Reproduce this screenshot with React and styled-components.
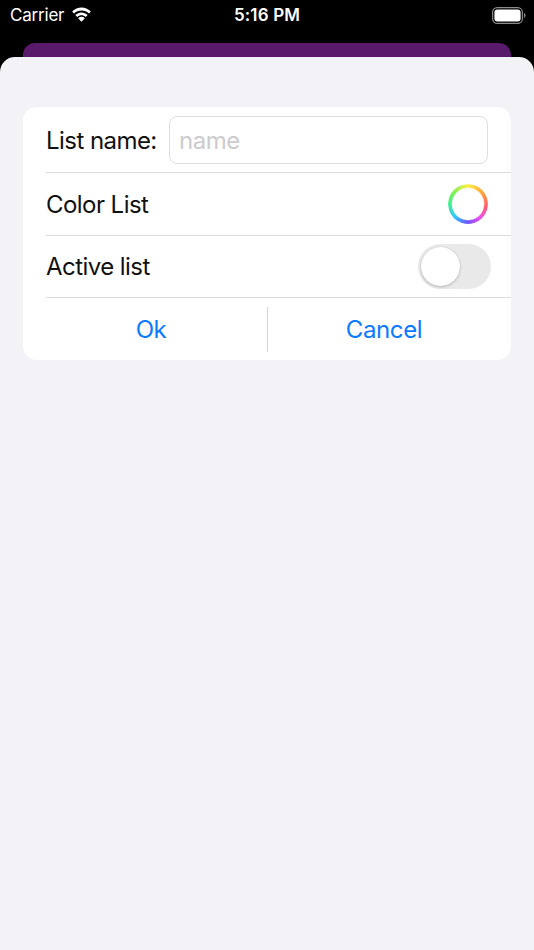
import React from "react";
import styled, { createGlobalStyle } from "styled-components";

const Global = createGlobalStyle`
  html, body { margin: 0; padding: 0; background: #000; }
  body { font-family: Inter, "Liberation Sans", sans-serif; -webkit-font-smoothing: antialiased; }
  * { box-sizing: border-box; }
`;
const Screen = styled.div`
  width: 534px; height: 950px; background: #000; display: flex; flex-direction: column; overflow: hidden;
`;
const StatusBar = styled.div`
  height: 43px; flex: none; display: grid; grid-template-columns: 1fr auto 1fr; align-items: start;
  padding: 0 8px; color: #fff;
`;
const StatusLeft = styled.div`display: flex; align-items: center; gap: 7px; height: 30px; padding-left: 2px;`;
const Carrier = styled.span`font-size: 17px; letter-spacing: -0.2px;`;
const Time = styled.span`font-size: 17px; font-weight: 600; line-height: 30px; letter-spacing: 0.15px;`;
const StatusRight = styled.div`display: flex; justify-content: flex-end; align-items: center; height: 30px;`;
const BackCard = styled.div`
  height: 14px; flex: none; margin: 0 23px; background: #591a6b; border-radius: 12px 12px 0 0;
`;
const Sheet = styled.div`
  flex: 1; background: #f2f2f7; border-radius: 15px 15px 0 0; padding: 50px 23px 0;
`;
const Card = styled.div`
  background: #fff; border-radius: 14px; height: 253px; display: flex; flex-direction: column;
  padding-left: 23px; overflow: hidden;
`;
const Row = styled.div`
  height: ${p => p.$h}px; flex: none; display: flex; align-items: center; justify-content: space-between;
  border-bottom: 1.5px solid #dcdcdf;
  padding-right: ${p => p.$pr}px;
`;
const Label = styled.span`
  font-size: 24px; color: #111; letter-spacing: -0.55px; white-space: nowrap;
  margin-top: ${p => p.$mt || 0}px;
`;
const NameInput = styled.input`
  width: 319px; height: 48px; border: 1.5px solid #dedee0; border-radius: 8px; background: #fff;
  font: inherit; font-size: 24px; letter-spacing: -0.5px; padding: 0 9px; outline: none; margin-top: 1px;
  &::placeholder { color: #cbcbce; opacity: 1; }
`;
const ColorRing = styled.div`
  width: 40px; height: 40px; border-radius: 50%;
  background: conic-gradient(#fff04a 0deg, #ffa040 55deg, #ff5a70 100deg, #f050f0 140deg, #7050ff 180deg, #30c8ff 225deg, #40f090 270deg, #80f050 310deg, #fff04a 360deg);
  -webkit-mask: radial-gradient(circle, transparent 15.5px, #000 16.8px);
  mask: radial-gradient(circle, transparent 15.5px, #000 16.8px);
`;
const Switch = styled.div`
  width: 73px; height: 45px; border-radius: 23px; background: #e9e9ea; padding: 3px; flex: none;
`;
const Knob = styled.div`
  width: 39px; height: 39px; border-radius: 50%; background: #fff;
  box-shadow: 0 1.5px 3px rgba(0,0,0,.14), 0 0 1.5px rgba(0,0,0,.2);
`;
const Actions = styled.div`
  flex: 1; display: grid; grid-template-columns: 221px 1fr; align-items: center;
`;
const ActionButton = styled.button`
  background: none; border: 0; height: 45px; font: inherit; font-size: 24px;
  letter-spacing: -0.4px; color: #0a7aff; padding: 1px 11px 0 0;
  border-left: ${p => (p.$divider ? "1.5px solid #d6d6d8" : "none")};
`;

const Wifi = () => (
  <svg width="21" height="16" viewBox="0 0 21 16" fill="#fff">
    <path d="M10.5 3.4c2.9 0 5.6 1.1 7.6 3l1.5-1.6a.4.4 0 0 0 0-.5C17.2 1.9 13.9.5 10.5.5S3.8 1.9 1.4 4.3a.4.4 0 0 0 0 .5l1.5 1.6c2-1.9 4.7-3 7.6-3z" />
    <path d="M10.5 8.2c1.6 0 3.1.6 4.3 1.7l1.6-1.6a.4.4 0 0 0 0-.5c-1.6-1.5-3.7-2.4-5.9-2.4s-4.3.9-5.9 2.4a.4.4 0 0 0 0 .5l1.6 1.6c1.2-1.1 2.7-1.7 4.3-1.7z" />
    <path d="M13.6 11.4a.4.4 0 0 0 0-.5c-.8-.8-1.9-1.2-3.1-1.2s-2.3.4-3.1 1.2a.4.4 0 0 0 0 .5l2.8 3a.4.4 0 0 0 .6 0z" />
  </svg>
);
const Battery = () => (
  <svg width="34" height="17" viewBox="0 0 34 17">
    <rect x="0.6" y="0.6" width="29.8" height="15.8" rx="4.6" fill="none" stroke="#8a8a8a" strokeWidth="1.2" />
    <rect x="2.4" y="2.4" width="26.2" height="12.2" rx="3" fill="#fff" />
    <path d="M32 6v5c.9-.3 1.500-1.400 1.500-2.500S32.900 6.300 32 6z" fill="#8a8a8a" />
  </svg>
);

export default function App() {
  return (
    <Screen>
      <Global />
      <StatusBar>
        <StatusLeft>
          <Carrier>Carrier</Carrier>
          <Wifi />
        </StatusLeft>
        <Time>5:16 PM</Time>
        <StatusRight><Battery /></StatusRight>
      </StatusBar>
      <BackCard />
      <Sheet>
        <Card>
          <Row $h={66} $pr={23}>
            <Label $mt={1}>List name:</Label>
            <NameInput placeholder="name" readOnly />
          </Row>
          <Row $h={63} $pr={23}>
            <Label>Color List</Label>
            <ColorRing />
          </Row>
          <Row $h={62} $pr={20}>
            <Label>Active list</Label>
            <Switch><Knob /></Switch>
          </Row>
          <Actions>
            <ActionButton>Ok</ActionButton>
            <ActionButton $divider>Cancel</ActionButton>
          </Actions>
        </Card>
      </Sheet>
    </Screen>
  );
}
